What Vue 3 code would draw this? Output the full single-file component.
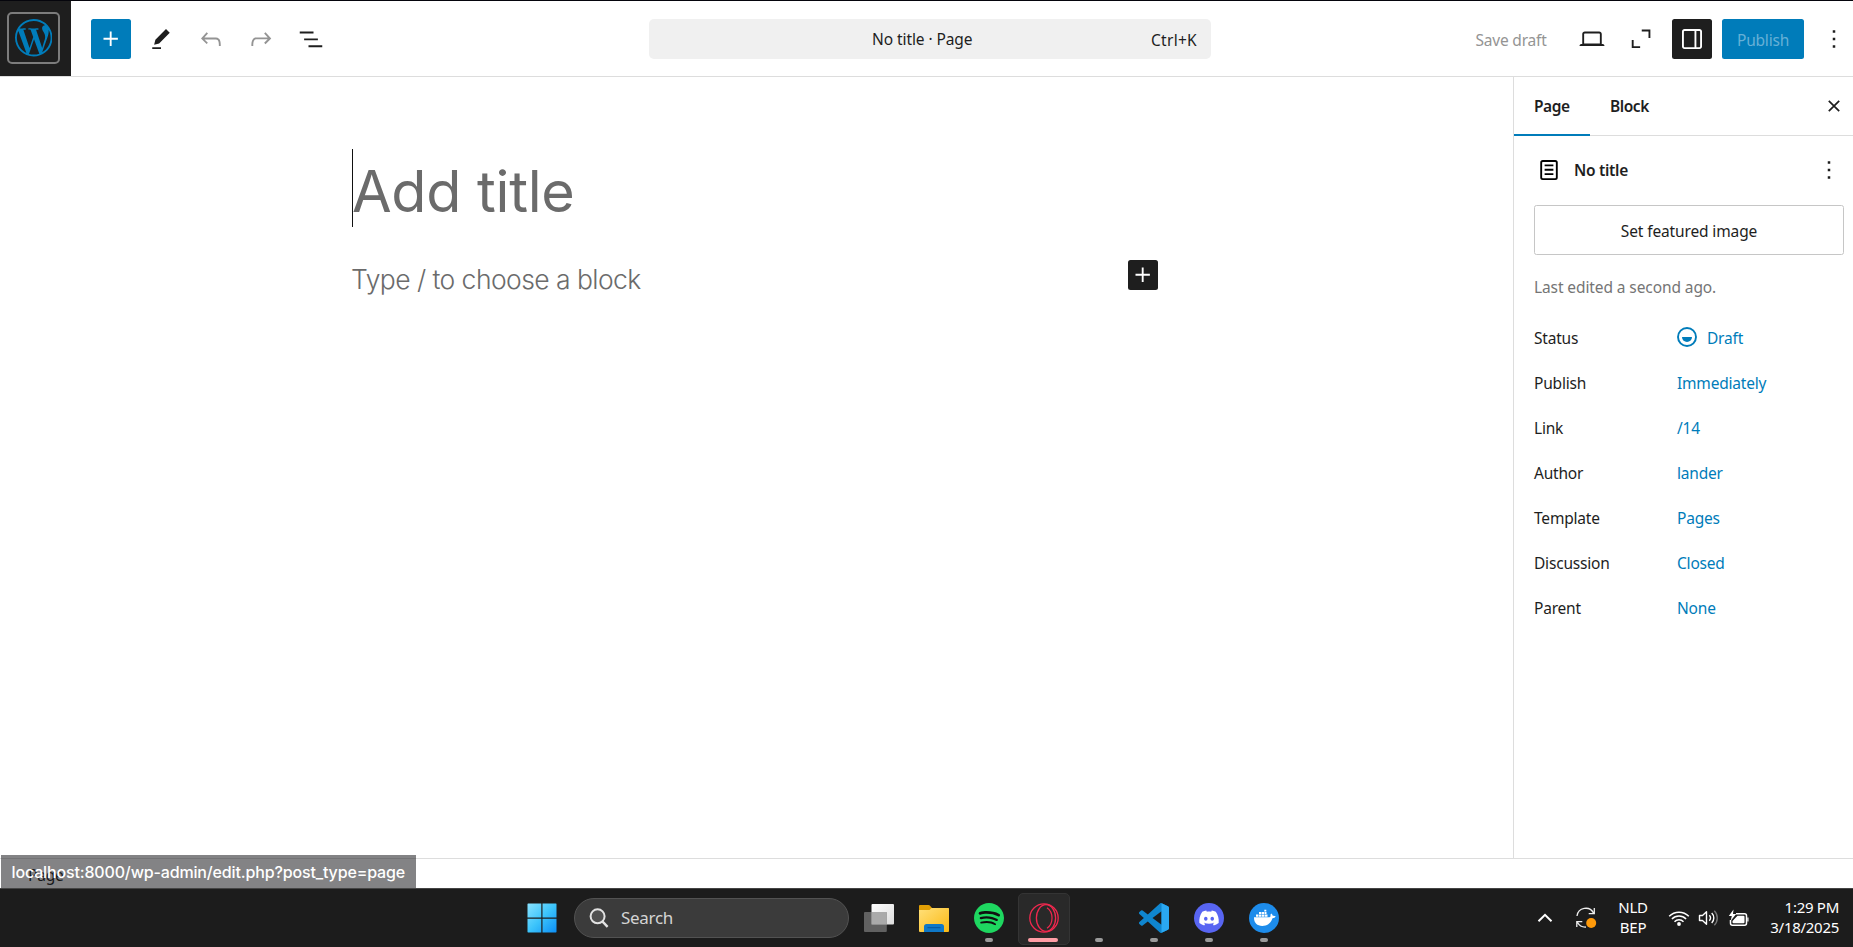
<script setup>
const rows = [
  { label: 'Status', value: 'Draft', icon: true },
  { label: 'Publish', value: 'Immediately' },
  { label: 'Link', value: '/14' },
  { label: 'Author', value: 'lander' },
  { label: 'Template', value: 'Pages' },
  { label: 'Discussion', value: 'Closed' },
  { label: 'Parent', value: 'None' },
]
const plus = 'M11 12.5V17.5H12.5V12.5H17.5V11H12.5V6H11V11H6V12.5H11Z'
const more = 'M13 19h-2v-2h2v2zm0-6h-2v-2h2v2zm0-6h-2V5h2v2z'
const tools = [
  { name: 'edit', d: 'm19 7-3-3-8.5 8.5-1 4 4-1L19 7Zm-7 11.5H5V20h7v-1.5Z' },
  { name: 'undo', off: true, d: 'M18.3 11.7c-.6-.6-1.4-.9-2.3-.9H6.7l2.9-3.3-1.1-1-4.5 5L8.5 16l1-1-2.7-2.7H16c.5 0 .9.2 1.3.5 1 1 1 3.4 1 4.5v.3h1.5v-.2c0-1.5 0-4.3-1.5-5.7z' },
  { name: 'redo', off: true, d: 'M15.6 6.5l-1.1 1 2.9 3.3H8c-.9 0-1.7.3-2.3.9-1.4 1.5-1.4 4.2-1.4 5.6v.2h1.5v-.3c0-1.1 0-3.5 1-4.5.3-.3.7-.5 1.3-.5h9.2L14.5 15l1.1 1.1 4.6-4.6-4.6-5z' },
  { name: 'list', d: 'M3 6h11v1.5H3V6Zm3.5 5.5h11V13h-11v-1.5ZM21 17H10v1.5h11V17Z' },
]
</script>

<template>
  <div class="screen">
    <header class="topbar">
      <div class="home">
        <div class="home-ring">
          <svg width="37.5" height="37.5" viewBox="0 0 24 24" fill="#007cba"><path d="M21.469 6.825c.84 1.537 1.318 3.3 1.318 5.175 0 3.979-2.156 7.456-5.363 9.325l3.295-9.527c.615-1.54.82-2.771.82-3.864 0-.405-.026-.78-.07-1.11m-7.981.105c.647-.03 1.232-.105 1.232-.105.582-.075.514-.93-.067-.899 0 0-1.755.135-2.88.135-1.064 0-2.85-.15-2.85-.15-.585-.03-.661.855-.075.885 0 0 .54.061 1.125.09l1.68 4.605-2.37 7.08L5.354 6.9c.649-.03 1.234-.1 1.234-.1.585-.075.516-.93-.065-.896 0 0-1.746.138-2.874.138-.2 0-.438-.008-.69-.015C4.911 3.15 8.235 1.215 12 1.215c2.809 0 5.365 1.072 7.286 2.833-.046-.003-.091-.009-.141-.009-1.06 0-1.812.923-1.812 1.914 0 .89.513 1.643 1.06 2.531.411.72.89 1.643.89 2.977 0 .915-.354 1.994-.821 3.479l-1.075 3.585-3.9-11.61.001.014zM12 22.784c-1.059 0-2.081-.153-3.048-.437l3.237-9.406 3.315 9.087c.024.053.05.101.078.149-1.12.393-2.325.609-3.582.609M1.211 12c0-1.564.336-3.05.935-4.39L7.29 21.709C3.694 19.96 1.212 16.271 1.211 12M12 0C5.385 0 0 5.385 0 12s5.385 12 12 12 12-5.385 12-12S18.615 0 12 0" /></svg>
        </div>
      </div>
      <div class="tools">
        <div class="btn primary"><svg class="ic" viewBox="0 0 24 24"><path :d="plus" /></svg></div>
        <div v-for="t in tools" :key="t.name" class="btn" :class="{ off: t.off }">
          <svg class="ic" viewBox="0 0 24 24"><path :d="t.d" /></svg>
        </div>
      </div>
      <div class="command"><span class="doc">No title · Page</span><span class="keys">Ctrl+K</span></div>
      <div class="actions">
        <span class="save">Save draft</span>
        <div class="btn"><svg class="ic" viewBox="0 0 24 24"><path d="M20.5 16h-.7V8c0-1.1-.9-2-2-2H6.2c-1.1 0-2 .9-2 2v8h-.7c-.8 0-1.5.7-1.5 1.5h20c0-.8-.7-1.5-1.5-1.5zM5.7 8c0-.3.2-.5.5-.5h11.6c.3 0 .5.2.5.5v7.6H5.7V8z" /></svg></div>
        <div class="btn"><svg class="ic" viewBox="0 0 24 24"><path d="M11.8 4.4v1.5h5.4v5.3h1.5V4.400zM5.300 12.800H3.800v6.400h6.700v-1.500H5.300z" /></svg></div>
        <div class="btn dark"><svg class="ic" viewBox="0 0 24 24"><path d="M18 4H6c-1.1 0-2 .9-2 2v12c0 1.1.9 2 2 2h12c1.1 0 2-.9 2-2V6c0-1.1-.9-2-2-2zm-4 14.5H6c-.3 0-.5-.2-.5-.5V6c0-.3.2-.5.5-.5h8v13zm4.5-.5c0 .3-.2.5-.5.5h-2.5v-13H18c.3 0 .5.2.5.5v12z" /></svg></div>
        <div class="publish">Publish</div>
        <div class="btn"><svg class="ic" viewBox="0 0 24 24"><path :d="more" /></svg></div>
      </div>
    </header>

    <div class="body">
      <main class="canvas">
        <h1 class="title"><span>Add title</span></h1>
        <div class="para">
          <p class="hint">Type / to choose a block</p>
          <div class="inserter"><svg class="ic" viewBox="0 0 24 24"><path :d="plus" /></svg></div>
        </div>
      </main>
      <aside class="side">
        <div class="tabs">
          <div class="tab active"><span>Page</span></div>
          <div class="tab"><span>Block</span></div>
          <svg class="close" viewBox="0 0 12 12"><path d="M.8.8l10.4 10.4M11.2.8L.8 11.2" /></svg>
        </div>
        <div class="card">
          <svg class="ic page-ic" viewBox="0 0 24 24"><path d="M15.5 7.5h-7V9h7V7.5Zm-7 3.5h7v1.5h-7V11Zm7 3.5h-7V16h7v-1.5Z" /><path d="M17 4H7a2 2 0 0 0-2 2v12a2 2 0 0 0 2 2h10a2 2 0 0 0 2-2V6a2 2 0 0 0-2-2ZM7 5.500h10a.5.5 0 0 1 .5.5v12a.5.5 0 0 1-.5.5H7a.5.5 0 0 1-.5-.5V6a.5.5 0 0 1 .5-.5Z" /></svg>
          <span class="name">No title</span>
          <svg class="ic" viewBox="0 0 24 24"><path :d="more" /></svg>
        </div>
        <div class="featured">Set featured image</div>
        <p class="edited">Last edited a second ago.</p>
        <div v-for="r in rows" :key="r.label" class="row">
          <span class="label">{{ r.label }}</span>
          <span class="value">
            <svg v-if="r.icon" class="draft" viewBox="0 0 20 20"><circle cx="10" cy="10" r="9" /><path d="M5 10h10a5 5 0 0 1-10 0z" /></svg>
            <span>{{ r.value }}</span>
          </span>
        </div>
      </aside>
    </div>

    <footer class="crumbs"><span>Page</span></footer>
    <div class="status">localhost:8000/wp-admin/edit.php?post_type=page</div>

    <div class="taskbar">
      <div class="dock">
        <div class="slot start">
          <svg width="30" height="30" viewBox="0 0 30 30">
            <defs><linearGradient id="win" x1="0" y1="0" x2="30" y2="30" gradientUnits="userSpaceOnUse"><stop offset="0" stop-color="#8ce4ff" /><stop offset=".5" stop-color="#3cc4fb" /><stop offset="1" stop-color="#0a8cf5" /></linearGradient></defs>
            <path fill="url(#win)" d="M1 .5h13.3v14H.5V1zM15.5.5h13.6l.4.5v13.5h-14zM.5 15.7h13.8v13.8H1l-.5-.5zM15.500 15.700h14V29l-.5.5H15.500z" />
          </svg>
        </div>
        <div class="search">
          <svg width="20" height="20" viewBox="0 0 20 20" fill="none" stroke="#e2e2e2" stroke-width="2"><circle cx="8.6" cy="8.3" r="7" fill="#515151" /><path d="M13.6 13.6l5 5.2" stroke-width="2.4" /></svg>
          <span>Search</span>
        </div>
        <div class="slot">
          <svg width="30" height="28" viewBox="0 0 30 28">
            <defs><linearGradient id="tv" x1="0" y1="0" x2="1" y2="1"><stop offset="0" stop-color="#fff" /><stop offset="1" stop-color="#dcdcdc" /></linearGradient></defs>
            <rect x="7.5" y="0" width="22.5" height="20.5" rx="1" fill="url(#tv)" /><rect x="0" y="8" width="22.8" height="20" rx="1" fill="#707070" fill-opacity=".82" /><rect x="7.5" y="8" width="15.3" height="12.5" fill="#aaa" />
          </svg>
        </div>
        <div class="slot">
          <svg width="30" height="27" viewBox="0 0 30 27">
            <defs><linearGradient id="fo" x1="0" y1="0" x2="1" y2="1"><stop offset="0" stop-color="#ffe07a" /><stop offset="1" stop-color="#fbb913" /></linearGradient></defs>
            <path fill="#e19f05" d="M0 1q0-1 1-1h8.5q.8 0 1.3.5L13 3h16q1 0 1 1v4H0z" /><path fill="url(#fo)" d="M0 5h10.5l2-2H29q1 0 1 1v22q0 1-1 1H1q-1 0-1-1z" /><path fill="#0f78c8" d="M5 27v-5.5Q5 19 7.500 19h15q2.500 0 2.500 2.500V27z" /><path stroke="#07559d" stroke-width="1" d="M8.500 22.700h13" />
          </svg>
        </div>
        <div class="slot">
          <svg width="30" height="30" viewBox="0 0 24 24"><circle cx="12" cy="12" r="11.5" fill="#101010" /><path fill="#1ed760" d="M12 0C5.400 0 0 5.400 0 12s5.400 12 12 12 12-5.400 12-12S18.660 0 12 0zm5.521 17.340c-.24.359-.66.48-1.021.24-2.820-1.740-6.360-2.101-10.561-1.141-.418.122-.779-.179-.899-.539-.12-.421.18-.78.54-.9 4.560-1.021 8.520-.6 11.640 1.320.42.18.479.659.301 1.020zm1.440-3.300c-.301.42-.841.6-1.262.3-3.239-1.980-8.159-2.580-11.939-1.380-.479.12-1.020-.12-1.140-.6-.12-.48.12-1.021.6-1.141C9.600 9.900 15 10.561 18.720 12.840c.361.181.54.78.241 1.200zm.12-3.360C15.240 8.400 8.820 8.160 5.160 9.301c-.6.179-1.200-.181-1.380-.721-.18-.601.18-1.200.72-1.381 4.260-1.260 11.280-1.020 15.721 1.621.539.3.719 1.020.419 1.560-.299.421-1.020.599-1.559.3z" /></svg>
          <i class="dot"></i>
        </div>
        <div class="slot current">
          <svg width="30" height="30" viewBox="0 0 30 30" fill="none" stroke="#f0284e" stroke-width="1.300"><circle cx="15" cy="15" r="14.200" /><ellipse cx="17" cy="15" rx="9.600" ry="13.400" /><path d="M18 4.800c6.700 4.500 6.700 16 0 20.400" stroke-width="1.200" /></svg>
          <i class="dot wide"></i>
        </div>
        <div class="slot"><i class="dot"></i></div>
        <div class="slot">
          <svg width="30" height="30" viewBox="0 0 24 24"><path fill="#0f86cf" d="M23.150 2.587L18.210.21a1.494 1.494 0 0 0-1.705.29l-9.460 8.630-4.120-3.128a.999.999 0 0 0-1.276.057L.327 7.261A1 1 0 0 0 .326 8.740L3.899 12 .326 15.260a1 1 0 0 0 .001 1.479L1.650 17.940a.999.999 0 0 0 1.276.057l4.120-3.128 9.460 8.630a1.492 1.492 0 0 0 1.704.29l4.942-2.377A1.500 1.500 0 0 0 24 20.060V3.939a1.500 1.500 0 0 0-.85-1.352zm-5.146 14.861L10.826 12l7.178-5.448v10.896z" /><path fill="#2aa8f2" d="M18 .15l5.150 2.437q.85.4.85 1.352V20.060q0 .95-.85 1.353L18 23.850z" /></svg>
          <i class="dot"></i>
        </div>
        <div class="slot">
          <svg width="30" height="30" viewBox="0 0 30 30"><circle cx="15" cy="15" r="15" fill="#5865f2" /><g transform="translate(5.300 5.300) scale(.81)"><path fill="#fff" d="M20.317 4.370a19.800 19.800 0 00-4.885-1.515c-.3.400-.5.900-.687 1.287-1.845-.276-3.680-.276-5.487 0-.2-.4-.4-.9-.696-1.287A19.700 19.700 0 003.677 4.370C.533 9.046-.319 13.580.099 18.058c2.100 1.600 4.100 2.500 6.024 3.085.5-.65.9-1.350 1.310-2.022-.7-.3-1.300-.6-1.914-.998l.45-.42c3.928 1.793 8.180 1.793 12.061 0l.45.42c-.6.400-1.200.7-1.880 1.019.4.7.8 1.370 1.225 1.993 2.050-.6 4-1.500 6.118-3.056.5-5.177-.838-9.674-3.580-13.690zM8.020 15.331c-1.182 0-2.157-1.086-2.157-2.419s.956-2.419 2.157-2.419 2.176 1.095 2.157 2.419c0 1.333-.956 2.419-2.157 2.419zm7.975 0c-1.183 0-2.157-1.086-2.157-2.419s.955-2.419 2.157-2.419c1.210 0 2.176 1.095 2.157 2.419 0 1.333-.946 2.419-2.157 2.419z" /></g></svg>
          <i class="dot"></i>
        </div>
        <div class="slot">
          <svg width="30" height="30" viewBox="0 0 30 30"><circle cx="15" cy="15" r="15" fill="#1d8ceb" /><path fill="#fff" d="M5 14.300h15.600c.8-.2 1.100-.8.900-1.800-.1-.7.1-1.300.7-2 .8.500 1.400 1.300 1.500 2.200 1-.2 2.100 0 3 .6-.5 1.200-1.600 1.900-3.200 1.900-1.700 4.900-4.900 7.700-10.200 7.700C8 22.900 4.800 19.700 5 14.300z" /><path fill="#fff" d="M7 11.500h2.500v2.200H7zM10 11.500h2.500v2.200H10zM13 11.500h2.500v2.200H13zM16 11.500h2.500v2.200H16zM10 9h2.500v2.100H10zM13 9h2.500v2.100H13zM16 9h1.500v2.100H16zM15.300 6.800h2v1.800h-2z" /></svg>
          <i class="dot"></i>
        </div>
      </div>
      <div class="tray">
        <svg class="chev" width="16" height="10" viewBox="0 0 16 10" fill="none" stroke="#fff" stroke-width="2"><path d="M1.500 8.200L8 1.800l6.500 6.400" /></svg>
        <svg class="sync" width="22" height="22" viewBox="0 0 22 22" fill="none" stroke="#eee" stroke-width="1.300"><path d="M2 9A8.800 8.800 0 0 1 18.500 6M19.300 1v5.700h-5.600M1.800 20v-5.300h5.500M2.500 15.500A9 9 0 0 0 11 20" /><circle cx="16.200" cy="16" r="5" fill="#ff9a0a" stroke="none" /></svg>
        <div class="lang"><span>NLD</span><span>BEP</span></div>
        <svg class="wifi" width="22" height="17" viewBox="0 0 22 17" fill="none" stroke="#fff" stroke-width="1.500"><path d="M1.200 6.300a13.800 13.800 0 0 1 19.600 0M3.900 9a10 10 0 0 1 14.200 0M6.500 11.700a6.400 6.400 0 0 1 9 0" /><circle cx="11" cy="14" r="1.900" fill="#fff" stroke="none" /></svg>
        <svg class="vol" width="22" height="18" viewBox="0 0 22 18" fill="none" stroke="#fff" stroke-width="1.400" stroke-linejoin="round"><path d="M1.500 6.500h3l4-3.700v12.400l-4-3.700h-3zM11.300 6.300a4 4 0 0 1 0 5.400M13.700 4a7 7 0 0 1 0 10" /><path d="M16.300 1.800a10.200 10.200 0 0 1 0 14.400" stroke="#777" /></svg>
        <svg class="bat" width="22" height="19" viewBox="0 0 22 19"><path fill="none" stroke="#fff" stroke-width="1.500" d="M8 4.700h8.500q2 0 2 2v7.600q0 2-2 2H4.500q-2 0-2-2V11" /><path fill="#fff" d="M9.500 6.700h6q1 0 1 1v5.600q0 1-1 1h-10q-1 0-1-1V12zM19.300 8.500h1.200v4h-1.200zM5.500.5L.8 7h3L2.600 12 8.200 5H5z" /></svg>
        <div class="clock"><span>1:29 PM</span><span>3/18/2025</span></div>
      </div>
    </div>
  </div>
</template>

<style>
body { margin: 0; overflow: hidden; }
</style>

<style scoped>
.screen { position: relative; width: 1853px; height: 947px; overflow: hidden; display: flex; flex-direction: column; box-sizing: border-box; border-top: 1px solid #05050c; background: #fff; color: #1e1e1e; font: 15.500px/20px "Noto Sans", "Open Sans", sans-serif; letter-spacing: -.2px; }
.screen * { box-sizing: border-box; }
h1, p { margin: 0; font-weight: 400; }
span { white-space: nowrap; }
svg { display: block; flex: none; }
.ic { width: 30px; height: 30px; fill: currentColor; }
.topbar { height: 76px; flex: none; display: flex; border-bottom: 1px solid #ddd; }
.home { width: 71px; height: 75px; background: #1e1e1e; padding: 11px 0 0 7px; flex: none; }
.home-ring { width: 53px; height: 52px; border: 2px solid #7c7c7c; border-radius: 5px; display: flex; align-items: center; justify-content: center; }
.tools { display: flex; gap: 10px; padding: 18px 0 0 20px; width: 578px; flex: none; }
.btn { width: 40px; height: 40px; flex: none; display: flex; align-items: center; justify-content: center; border-radius: 2.500px; }
.primary { background: #007cba; color: #fff; }
.dark { background: #1e1e1e; color: #fff; }
.off { color: #949494; }
.command { width: 562px; height: 40px; margin-top: 18px; background: #f0f0f0; border-radius: 5px; flex: none; display: flex; align-items: center; padding: 0 14px 0 223px; justify-content: space-between; }
.doc { letter-spacing: -.08px; }
.keys { padding-top: 2px; letter-spacing: .3px; }
.actions { flex: none; display: flex; align-items: center; gap: 10px; height: 40px; margin: 18px 0 0 264.500px; }
.save { width: 86.500px; color: #949494; padding-top: 2px; }
.publish { width: 82px; height: 40px; background: #007cba; color: #66b0d6; border-radius: 2.500px; display: flex; align-items: center; justify-content: center; padding-top: 2px; }
.body { height: 781px; flex: none; display: flex; }
.canvas { width: 1513px; padding: 72px 0 0 352px; }
.title { border-left: 1px solid #111; height: 78px; line-height: 84px; font-family: Inter, sans-serif; font-size: 57.500px; color: #6b6b6b; letter-spacing: -.3px; width: 806px; }
.title span { margin-left: -1px; }
.para { display: flex; justify-content: space-between; width: 806px; padding-top: 33px; }
.hint { font: 300 26.500px/40px Inter, sans-serif; color: #6b6b6b; letter-spacing: -.56px; margin: -1px 0 0 -1px; }
.inserter { width: 30px; height: 30px; background: #1e1e1e; color: #fff; border-radius: 2.500px; }
.side { width: 340px; border-left: 1px solid #ddd; }
.tabs { height: 59px; border-bottom: 1px solid #ddd; display: flex; font-weight: 600; letter-spacing: -.45px; }
.tab { height: 59px; padding: 19px 20px 0; width: 76px; }
.active { border-bottom: 2px solid #007cba; }
.close { width: 12px; height: 12px; margin: 23px 0 0 162px; fill: none; stroke: #1e1e1e; stroke-width: 1.700; }
.card { display: flex; align-items: center; padding: 19px 9px 0 20px; height: 49px; font-weight: 600; }
.page-ic { fill: #000; }
.name { flex: 1; padding-left: 10px; letter-spacing: -.3px; }
.featured { margin: 20px 0 0 20px; width: 310px; height: 50px; border: 1px solid #c6c6c6; border-radius: 2.500px; line-height: 51px; text-align: center; letter-spacing: -.13px; }
.edited { color: #757575; margin: 22px 0 0 20px; letter-spacing: -.1px; }
.row { display: flex; height: 45px; align-items: center; padding-left: 20px; }
.edited + .row { margin-top: 18px; }
.label { width: 143px; }
.value { display: flex; color: #007cba; gap: 10px; }
.draft { width: 20px; height: 20px; margin-top: -1px; }
.draft circle { fill: none; stroke: #007cba; stroke-width: 1.900; }
.draft path { fill: #007cba; }
.crumbs { flex: none; height: 30px; border-top: 1px solid #ddd; padding: 6px 0 0 28px; }
.status { position: absolute; left: 1px; top: 854px; width: 415px; height: 33px; background: rgba(18, 18, 22, .52); color: #fff; font: 500 16px/34px Inter, sans-serif; padding-left: 10.500px; letter-spacing: -.15px; white-space: nowrap; }
.taskbar { flex: none; height: 59px; background: #1c1c1c; border-top: 1px solid #444; display: flex; justify-content: space-between; color: #fff; }
.dock { display: flex; padding-left: 514px; height: 58px; align-items: center; }
.slot { position: relative; width: 55px; height: 58px; display: flex; align-items: center; justify-content: center; }
.search { margin: 0 2px 0 5px; width: 275px; height: 40px; border-radius: 20px; background: #3b3b3b; border: 1px solid #525252; display: flex; align-items: center; gap: 12px; padding-left: 14px; color: #d4d4d4; font-size: 17px; letter-spacing: -.3px; }
.current::before { content: ""; position: absolute; left: 2px; top: 4px; width: 50px; height: 50px; border: 1px solid #343434; border-radius: 5px; background: #292929; }
.current svg { position: relative; }
.dot { position: absolute; left: 23.500px; top: 49px; width: 8px; height: 4px; border-radius: 2px; background: #9a9a9a; }
.wide { left: 12px; width: 30px; background: #ff9ea6; }
.tray { display: flex; align-items: center; height: 58px; padding-right: 14px; }
.lang, .clock { display: flex; flex-direction: column; font-size: 15px; margin-top: -2px; }
.lang { width: 36px; align-items: center; margin-left: 18px; margin-right: 17px; }
.clock { width: 78px; margin-left: 11px; align-items: flex-end; letter-spacing: -.28px; }
.sync { margin-left: 22px; }
.vol { margin-left: 8px; }
.bat { margin-left: 8px; }
</style>
